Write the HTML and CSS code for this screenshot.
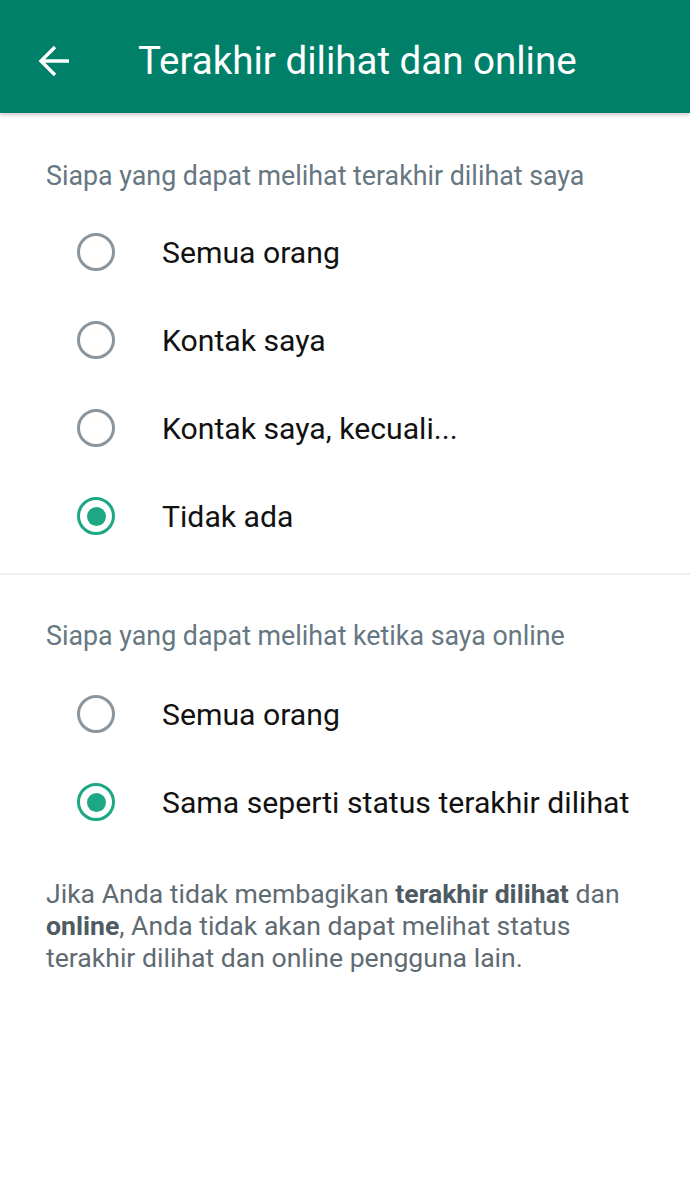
FILE: index.html
```html
<!DOCTYPE html>
<html lang="id">
<head>
<meta charset="utf-8">
<title>Terakhir dilihat dan online</title>
<link rel="stylesheet" href="styles.css">
</head>
<body>
<header class="appbar">
  <svg class="back" width="32" height="32" viewBox="0 0 32 32" aria-hidden="true">
    <path d="M31 16H3 M17 2L3 16l14 14" fill="none" stroke="#fff" stroke-width="3.4"/>
  </svg>
  <h1 class="title">Terakhir dilihat dan online</h1>
</header>

<section class="group first">
  <h2 class="group-title">Siapa yang dapat melihat terakhir dilihat saya</h2>
  <div class="option"><span class="radio"></span><span class="label">Semua orang</span></div>
  <div class="option"><span class="radio"></span><span class="label">Kontak saya</span></div>
  <div class="option"><span class="radio"></span><span class="label">Kontak saya, kecuali...</span></div>
  <div class="option"><span class="radio checked"></span><span class="label">Tidak ada</span></div>
</section>

<div class="divider"></div>

<section class="group second">
  <h2 class="group-title">Siapa yang dapat melihat ketika saya online</h2>
  <div class="option"><span class="radio"></span><span class="label">Semua orang</span></div>
  <div class="option"><span class="radio checked"></span><span class="label">Sama seperti status terakhir dilihat</span></div>
</section>

<p class="note">Jika Anda tidak membagikan <b>terakhir dilihat</b> dan <b>online</b>, Anda tidak akan dapat melihat status terakhir dilihat dan online pengguna lain.</p>
</body>
</html>
```

FILE: styles.css
```css
* { box-sizing: border-box; }
html, body { margin: 0; padding: 0; background: #fff; }
body { font-family: Roboto, "Noto Sans", sans-serif; width: 690px; }

.appbar {
  height: 113px;
  padding-top: 9px;
  background: #008069;
  display: flex;
  align-items: center;
  box-shadow: 0 2px 4px rgba(0,0,0,0.22);
  position: relative;
}
.back { margin-left: 38px; flex: none; }
.title {
  margin: 0 0 0 68px;
  color: #fff;
  font-weight: 400;
  font-size: 38.5px;
  line-height: 44px;
}

.group-title {
  margin: 0;
  padding-left: 46px;
  font-size: 26.8px;
  line-height: 32px;
  font-weight: 400;
  color: #667781;
  white-space: nowrap;
}
.first .group-title { margin-top: 47px; margin-bottom: 16px; }
.second .group-title { margin-top: 45px; margin-bottom: 18px; }

.option {
  height: 88px;
  display: flex;
  align-items: center;
}
.radio {
  flex: none;
  width: 38px;
  height: 38px;
  margin-left: 77px;
  border: 3.5px solid #8a959d;
  border-radius: 50%;
  position: relative;
}
.radio.checked { border-color: #1da784; }
.radio.checked::after {
  content: "";
  position: absolute;
  left: 50%; top: 50%;
  width: 19px; height: 19px;
  margin: -9.5px 0 0 -9.5px;
  border-radius: 50%;
  background: #1da784;
}
.label {
  margin-left: 47px;
  font-size: 30.2px;
  color: #111;
  white-space: nowrap;
}

.divider {
  height: 2px;
  background: #f0f0f0;
  margin-top: 13px;
}

.note {
  margin: 32px 0 0 0;
  padding: 0 44px 0 46px;
  font-size: 26.6px;
  line-height: 32px;
  color: #5f6b73;
}
.note b { font-weight: 700; color: #4f5b63; }
```
